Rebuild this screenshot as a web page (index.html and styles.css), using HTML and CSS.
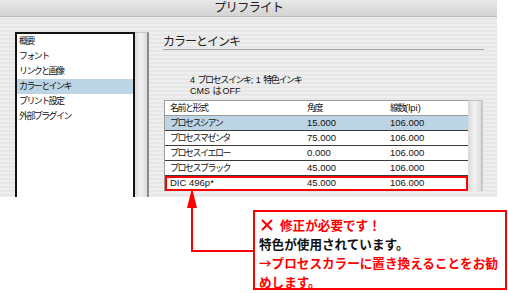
FILE: index.html
```html
<!DOCTYPE html>
<html lang="ja">
<head>
    <meta charset="utf-8">
    <title>プリフライト</title>
    <link rel="stylesheet" href="styles.css">
</head>
<body>
    <div class="dialog">
        <div class="titlebar">プリフライト</div>

        <div class="dialog-body">
            <div class="side">
                <ul class="side-list">
                    <li>概要</li>
                    <li>フォント</li>
                    <li>リンクと画像</li>
                    <li class="selected">カラーとインキ</li>
                    <li>プリント設定</li>
                    <li>外部プラグイン</li>
                </ul>
                <div class="scrollbar"></div>
            </div>

            <div class="panel">
                <h2 class="panel-title">カラーとインキ</h2>

                <div class="info">
                    <div><span class="num">4 </span>プロセスインキ<span class="num">; 1 </span>特色インキ</div>
                    <div><span class="num">CMS </span>は<span class="num"> OFF</span></div>
                </div>

                <div class="ink-wrap">
                    <div class="ink-table">
                        <div class="row head">
                            <span class="c-name">名前と形式</span>
                            <span class="c-angle">角度</span>
                            <span class="c-lpi">線数<span class="num">(lpi)</span></span>
                        </div>
                        <div class="row selected">
                            <span class="c-name">プロセスシアン</span>
                            <span class="c-angle num">15.000</span>
                            <span class="c-lpi num">106.000</span>
                        </div>
                        <div class="row">
                            <span class="c-name">プロセスマゼンタ</span>
                            <span class="c-angle num">75.000</span>
                            <span class="c-lpi num">106.000</span>
                        </div>
                        <div class="row">
                            <span class="c-name">プロセスイエロー</span>
                            <span class="c-angle num">0.000</span>
                            <span class="c-lpi num">106.000</span>
                        </div>
                        <div class="row">
                            <span class="c-name">プロセスブラック</span>
                            <span class="c-angle num">45.000</span>
                            <span class="c-lpi num">106.000</span>
                        </div>
                        <div class="row marked">
                            <span class="c-name num">DIC 496p*</span>
                            <span class="c-angle num">45.000</span>
                            <span class="c-lpi num">106.000</span>
                        </div>
                    </div>
                    <div class="scrollbar wide"></div>
                </div>
            </div>
        </div>
    </div>

    <!-- annotation arrow drawn over the dialog -->
    <svg class="pointer" width="508" height="293" viewBox="0 0 508 293">
        <polygon points="192,188 187,208 197,208" fill="#f00"/>
        <polyline points="192,207 192,251 254,251" fill="none" stroke="#f00" stroke-width="2"/>
    </svg>

    <div class="callout">
        <div class="callout-head">
            <svg class="cross" width="12" height="12" viewBox="0 0 12 12">
                <path d="M1 1 L11 11 M11 1 L1 11" stroke="#f00" stroke-width="2"/>
            </svg>
            修正が必要です！
        </div>
        <div class="callout-text">特色が使用されています。</div>
        <div class="callout-note">→プロセスカラーに置き換えることをお勧<br>めします。</div>
    </div>
</body>
</html>
```

FILE: styles.css
```css
body{
    margin: 0;
    width: 508px;
    height: 293px;
    position: relative;
    overflow: hidden;
    background-color: #fff;
    font-family: "Liberation Sans", "Noto Sans CJK JP", sans-serif;
    color: #111;
}
.dialog{
    width: 497px;
    height: 197px;
    overflow: hidden;
    background: repeating-linear-gradient(to bottom, #eeeeee 0, #eeeeee 2px, #e7e7e7 2px, #e7e7e7 4px);
}
.titlebar{
    height: 16px;
    line-height: 16px;
    border-bottom: 1px solid #b9b9b9;
    border-top-left-radius: 4px;
    background: linear-gradient(#e8e8e8, #d4d4d4);
    text-align: center;
    font-size: 12.5px;
    letter-spacing: -1px;
    color: #222;
}
.dialog-body{
    display: flex;
    height: 180px;
    padding: 15px 0 0 15px;
    box-sizing: border-box;
}

/* left category list */
.side{
    display: flex;
    width: 134px;
}
.side-list{
    list-style: none;
    margin: 0;
    padding: 0;
    width: 116px;
    background-color: #fff;
    border: 2px solid #111;
    border-bottom: none;
}
.side-list li{
    height: 15px;
    line-height: 15px;
    padding-left: 2px;
    font-size: 9px;
    letter-spacing: -1.6px;
}
.side-list li.selected{
    background-color: #bdd4e5;
}
.scrollbar{
    width: 12px;
    border-top: 1px solid #c4c4c4;
    border-right: 2px solid #8c8c8c;
    background: linear-gradient(to right, #d8d8d8, #f2f2f2 50%, #dcdcdc);
}
.scrollbar.wide{
    width: 13px;
    border-right: 2px solid #c9c9c9;
}

/* right panel */
.panel{
    margin-left: 14px;
    width: 321px;
}
.panel-title{
    margin: 3px 0 0;
    height: 14px;
    line-height: 14px;
    font-size: 12px;
    font-weight: normal;
    letter-spacing: -1px;
    color: #222;
    border-bottom: 1px solid #a2a2a2;
}
.info{
    margin-top: 25px;
    padding-left: 27px;
    font-size: 9px;
    line-height: 11px;
    letter-spacing: -1.4px;
}
.info .num{
    font-size: 9px;
    white-space: pre;
}
.ink-wrap{
    display: flex;
    margin: 3px 0 0 1px;
}
.ink-table{
    width: 303px;
    background-color: #fff;
    border-top: 1px solid #9c9c9c;
    border-left: 1px solid #9c9c9c;
}
.row{
    display: flex;
    height: 14px;
    line-height: 14px;
    border-bottom: 1px solid #3a3a3a;
    font-size: 9px;
    letter-spacing: -1.5px;
}
.row.head{
    border-bottom-color: #9c9c9c;
}
.row.selected{
    background-color: #bdd4e5;
}
.row.marked{
    outline: 2px solid #f00;
    outline-offset: -2px;
}
.c-name{
    width: 137px;
    padding-left: 5px;
}
.c-angle{
    width: 83px;
}
.num{
    font-size: 9.5px;
    letter-spacing: 0;
}

/* annotation */
.pointer{
    position: absolute;
    top: 0;
    left: 0;
    pointer-events: none;
}
.callout{
    box-sizing: border-box;
    width: 254px;
    height: 80px;
    margin: 13px 0 0 253px;
    padding: 3px 0 0 4px;
    border: 2px solid #f00;
    background-color: #fff;
    font-family: "Noto Sans CJK JP", sans-serif;
    font-size: 12.6px;
    font-weight: bold;
    line-height: 19px;
    white-space: nowrap;
}
.callout-head{
    display: flex;
    align-items: center;
    gap: 7px;
    padding-left: 2px;
    color: #f00;
}
.callout-text{
    color: #111;
}
.callout-note{
    color: #f00;
}
```
